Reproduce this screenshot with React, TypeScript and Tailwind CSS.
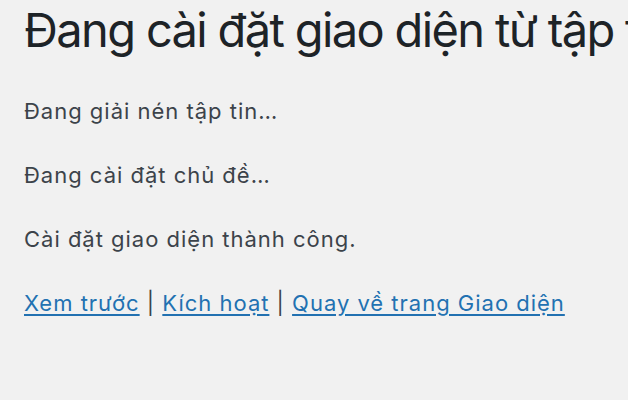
import React from 'react';

const steps = ['Đang giải nén tập tin…', 'Đang cài đặt chủ đề…', 'Cài đặt giao diện thành công.'];

export default function App() {
  return (
    <div className="min-h-[400px] w-[628px] overflow-hidden bg-[#f1f1f1] px-6 font-['Inter','Noto_Sans',sans-serif] text-[#3c434a]">
      <h1 className="whitespace-nowrap pt-[2px] text-[47px] font-normal leading-[56px] tracking-[-0.035em] text-[#1d2327]">
        Đang cài đặt giao diện từ tập tin đã tải lên
      </h1>
      <div className="mt-[40px] flex flex-col gap-[38px] text-[22px] leading-[26px] tracking-[0.045em]">
        {steps.map((s) => (
          <p key={s}>{s}</p>
        ))}
        <p>
          <a href="#" className="text-[#2271b1] underline underline-offset-[3px]">Xem trước</a>
          {' | '}
          <a href="#" className="text-[#2271b1] underline underline-offset-[3px]">Kích hoạt</a>
          {' | '}
          <a href="#" className="text-[#2271b1] underline underline-offset-[3px]">Quay về trang Giao diện</a>
        </p>
      </div>
    </div>
  );
}
